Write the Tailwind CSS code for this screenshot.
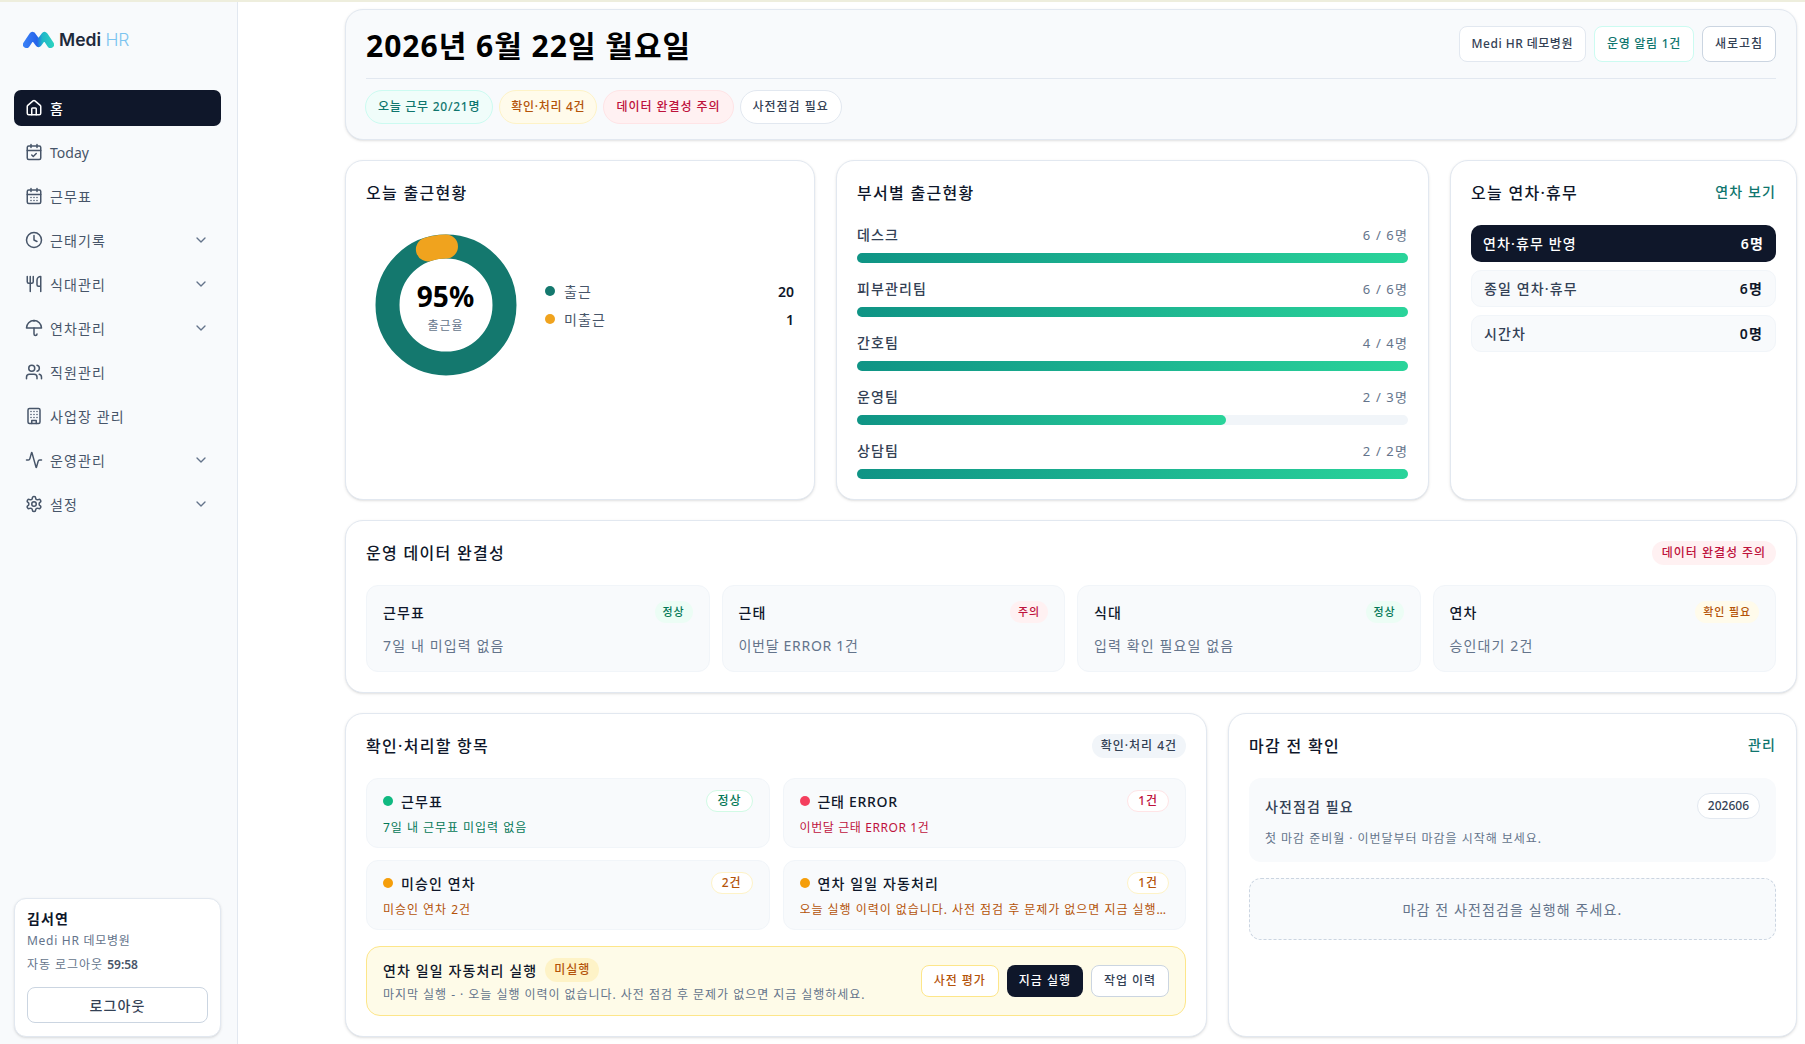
<!DOCTYPE html>
<html lang="ko">
<head>
  <meta charset="UTF-8">
  <title>Medi HR</title>
  <script src="https://cdn.jsdelivr.net/npm/@tailwindcss/browser@4"></script>
</head>
<body class="bg-white font-['Noto_Sans','Noto_Sans_CJK_KR',sans-serif] text-[#0f172a]">
<div class="h-[2px] bg-[#eeeedd]"></div>
<div class="flex h-[1042px] overflow-hidden">

  <!-- Sidebar -->
  <aside class="flex w-[238px] shrink-0 flex-col border-r border-[#e2e8f0] bg-[#f8fafc] pb-[7px] pl-[14px] pr-[16px]">
    <div class="flex h-[88px] items-start pl-[9px] pt-[29px]">
      <svg width="31" height="17" viewBox="0 0 31 17" fill="none">
        <defs>
          <linearGradient id="logoGrad" x1="0" y1="0" x2="31" y2="0" gradientUnits="userSpaceOnUse">
            <stop offset="0" stop-color="#3b82f6"/><stop offset=".45" stop-color="#2563eb"/><stop offset=".62" stop-color="#1fb6c9"/><stop offset="1" stop-color="#2dd4bf"/>
          </linearGradient>
        </defs>
        <path d="M3.5 13.5 9.5 4.5l6 8 6-8 6 9" stroke="url(#logoGrad)" stroke-width="7" stroke-linecap="round" stroke-linejoin="round"/>
      </svg>
      <span class="ml-[5px] font-['Inter'] text-[17.5px] leading-[18px] font-semibold text-[#1e293b]">Medi <span class="font-light text-[#7cc4f0]">HR</span></span>
    </div>

    <nav class="flex flex-col gap-[8px] text-[14px] tracking-[.08em] text-[#475569]">
      <a class="flex h-[36px] items-center gap-[7px] rounded-[7px] bg-[#0f172a] pl-[11px] pr-[12px] font-medium text-white">
        <svg class="size-[18px]" viewBox="0 0 24 24" fill="none" stroke="currentColor" stroke-width="2" stroke-linecap="round" stroke-linejoin="round"><path d="M15 21v-8a1 1 0 0 0-1-1h-4a1 1 0 0 0-1 1v8"/><path d="M3 10a2 2 0 0 1 .7-1.5l7-6a2 2 0 0 1 2.6 0l7 6A2 2 0 0 1 21 10v9a2 2 0 0 1-2 2H5a2 2 0 0 1-2-2z"/></svg>
        <span>홈</span>
      </a>
      <a class="flex h-[36px] items-center gap-[7px] pl-[11px] pr-[12px]">
        <svg class="size-[18px]" viewBox="0 0 24 24" fill="none" stroke="currentColor" stroke-width="2" stroke-linecap="round" stroke-linejoin="round"><path d="M8 2v4M16 2v4"/><rect x="3" y="4" width="18" height="18" rx="2"/><path d="M3 10h18M9 16l2 2 4-4"/></svg>
        <span class="tracking-normal">Today</span>
      </a>
      <a class="flex h-[36px] items-center gap-[7px] pl-[11px] pr-[12px]">
        <svg class="size-[18px]" viewBox="0 0 24 24" fill="none" stroke="currentColor" stroke-width="2" stroke-linecap="round" stroke-linejoin="round"><path d="M8 2v4M16 2v4"/><rect x="3" y="4" width="18" height="18" rx="2"/><path d="M3 10h18M8 14h.01M12 14h.01M16 14h.01M8 18h.01M12 18h.01M16 18h.01"/></svg>
        <span>근무표</span>
      </a>
      <a class="flex h-[36px] items-center gap-[7px] pl-[11px] pr-[12px]">
        <svg class="size-[18px]" viewBox="0 0 24 24" fill="none" stroke="currentColor" stroke-width="2" stroke-linecap="round" stroke-linejoin="round"><circle cx="12" cy="12" r="10"/><path d="M12 6v6l4 2"/></svg>
        <span class="flex-1">근태기록</span>
        <svg class="size-[16px] text-[#64748b]" viewBox="0 0 24 24" fill="none" stroke="currentColor" stroke-width="2" stroke-linecap="round" stroke-linejoin="round"><path d="m6 9 6 6 6-6"/></svg>
      </a>
      <a class="flex h-[36px] items-center gap-[7px] pl-[11px] pr-[12px]">
        <svg class="size-[18px]" viewBox="0 0 24 24" fill="none" stroke="currentColor" stroke-width="2" stroke-linecap="round" stroke-linejoin="round"><path d="M3 2v7c0 1.1.9 2 2 2h4a2 2 0 0 0 2-2V2M7 2v20M21 15V2a5 5 0 0 0-5 5v6c0 1.1.9 2 2 2h3zm0 0v7"/></svg>
        <span class="flex-1">식대관리</span>
        <svg class="size-[16px] text-[#64748b]" viewBox="0 0 24 24" fill="none" stroke="currentColor" stroke-width="2" stroke-linecap="round" stroke-linejoin="round"><path d="m6 9 6 6 6-6"/></svg>
      </a>
      <a class="flex h-[36px] items-center gap-[7px] pl-[11px] pr-[12px]">
        <svg class="size-[18px]" viewBox="0 0 24 24" fill="none" stroke="currentColor" stroke-width="2" stroke-linecap="round" stroke-linejoin="round"><path d="M22 12a10 10 0 0 0-20 0z"/><path d="M12 12v8a2 2 0 0 0 4 0M12 2v1"/></svg>
        <span class="flex-1">연차관리</span>
        <svg class="size-[16px] text-[#64748b]" viewBox="0 0 24 24" fill="none" stroke="currentColor" stroke-width="2" stroke-linecap="round" stroke-linejoin="round"><path d="m6 9 6 6 6-6"/></svg>
      </a>
      <a class="flex h-[36px] items-center gap-[7px] pl-[11px] pr-[12px]">
        <svg class="size-[18px]" viewBox="0 0 24 24" fill="none" stroke="currentColor" stroke-width="2" stroke-linecap="round" stroke-linejoin="round"><path d="M16 21v-2a4 4 0 0 0-4-4H6a4 4 0 0 0-4 4v2"/><circle cx="9" cy="7" r="4"/><path d="M22 21v-2a4 4 0 0 0-3-3.9M16 3.1a4 4 0 0 1 0 7.8"/></svg>
        <span>직원관리</span>
      </a>
      <a class="flex h-[36px] items-center gap-[7px] pl-[11px] pr-[12px]">
        <svg class="size-[18px]" viewBox="0 0 24 24" fill="none" stroke="currentColor" stroke-width="2" stroke-linecap="round" stroke-linejoin="round"><rect x="4" y="2" width="16" height="20" rx="2"/><path d="M9 22v-4h6v4M8 6h.01M12 6h.01M16 6h.01M8 10h.01M12 10h.01M16 10h.01M8 14h.01M12 14h.01M16 14h.01"/></svg>
        <span>사업장 관리</span>
      </a>
      <a class="flex h-[36px] items-center gap-[7px] pl-[11px] pr-[12px]">
        <svg class="size-[18px]" viewBox="0 0 24 24" fill="none" stroke="currentColor" stroke-width="2" stroke-linecap="round" stroke-linejoin="round"><path d="M22 12h-2.48a2 2 0 0 0-1.93 1.46l-2.35 8.36a.25.25 0 0 1-.48 0L9.24 2.18a.25.25 0 0 0-.48 0l-2.35 8.36A2 2 0 0 1 4.49 12H2"/></svg>
        <span class="flex-1">운영관리</span>
        <svg class="size-[16px] text-[#64748b]" viewBox="0 0 24 24" fill="none" stroke="currentColor" stroke-width="2" stroke-linecap="round" stroke-linejoin="round"><path d="m6 9 6 6 6-6"/></svg>
      </a>
      <a class="flex h-[36px] items-center gap-[7px] pl-[11px] pr-[12px]">
        <svg class="size-[18px]" viewBox="0 0 24 24" fill="none" stroke="currentColor" stroke-width="2" stroke-linecap="round" stroke-linejoin="round"><path d="M12.22 2h-.44a2 2 0 0 0-2 2v.18a2 2 0 0 1-1 1.73l-.43.25a2 2 0 0 1-2 0l-.15-.08a2 2 0 0 0-2.73.73l-.22.38a2 2 0 0 0 .73 2.73l.15.1a2 2 0 0 1 1 1.72v.51a2 2 0 0 1-1 1.74l-.15.09a2 2 0 0 0-.73 2.73l.22.38a2 2 0 0 0 2.73.73l.15-.08a2 2 0 0 1 2 0l.43.25a2 2 0 0 1 1 1.73V20a2 2 0 0 0 2 2h.44a2 2 0 0 0 2-2v-.18a2 2 0 0 1 1-1.73l.43-.25a2 2 0 0 1 2 0l.15.08a2 2 0 0 0 2.73-.73l.22-.39a2 2 0 0 0-.73-2.73l-.15-.08a2 2 0 0 1-1-1.74v-.5a2 2 0 0 1 1-1.74l.15-.09a2 2 0 0 0 .73-2.73l-.22-.38a2 2 0 0 0-2.73-.73l-.15.08a2 2 0 0 1-2 0l-.43-.25a2 2 0 0 1-1-1.73V4a2 2 0 0 0-2-2z"/><circle cx="12" cy="12" r="3"/></svg>
        <span class="flex-1">설정</span>
        <svg class="size-[16px] text-[#64748b]" viewBox="0 0 24 24" fill="none" stroke="currentColor" stroke-width="2" stroke-linecap="round" stroke-linejoin="round"><path d="m6 9 6 6 6-6"/></svg>
      </a>
    </nav>

    <div class="mt-auto h-[139px] rounded-[12px] border border-[#e2e8f0] bg-white px-[12px] pt-[10px] shadow-sm">
      <div class="text-[14px] leading-[20px] font-semibold tracking-[.08em]">김서연</div>
      <div class="mt-[3px] text-[12px] leading-[18px] tracking-[.06em] text-[#64748b]">Medi HR 데모병원</div>
      <div class="mt-[6px] text-[12px] leading-[18px] tracking-[.08em] text-[#64748b]">자동 로그아웃 <b class="font-semibold tracking-normal text-[#475569]">59:58</b></div>
      <button class="mt-[13px] h-[36px] w-full rounded-[8px] border border-[#cbd5e1] bg-white text-[14px] font-medium tracking-[.08em] text-[#334155]">로그아웃</button>
    </div>
  </aside>

  <!-- Main -->
  <main class="flex flex-1 flex-col gap-[20px] pl-[107px] pr-[8px] pt-[7px]">

    <!-- Date header -->
    <section class="h-[131px] shrink-0 rounded-[18px] border border-[#e2e8f0] bg-[#f8fafc] px-[20px] pt-[16px] shadow-sm">
      <div class="flex h-[53px] items-start justify-between border-b border-[#e2e8f0]">
        <h1 class="text-[30px] leading-[40px] font-bold tracking-[1px] text-black">2026년 6월 22일 월요일</h1>
        <div class="flex gap-[8px] text-[12px] font-medium tracking-[.08em]">
          <span class="flex h-[36px] items-center rounded-[8px] border border-[#e2e8f0] bg-white px-[12px] tracking-[.04em] text-[#334155]">Medi HR 데모병원</span>
          <span class="flex h-[36px] items-center rounded-[8px] border border-[#ccfbf1] bg-white px-[12px] tracking-[.06em] text-[#0f766e]">운영 알림 1건</span>
          <button class="h-[36px] rounded-[8px] border border-[#cbd5e1] bg-white px-[12px] font-medium text-[#334155]">새로고침</button>
        </div>
      </div>
      <div class="-ml-[1px] mt-[11px] flex gap-[6px] text-[12px] font-medium tracking-[.08em]">
        <span class="flex h-[34px] items-center rounded-full border border-[#ccfbf1] bg-[#f0fdfa] px-[12px] tracking-[.06em] text-[#0f766e]">오늘 근무 20/21명</span>
        <span class="flex h-[34px] items-center rounded-full border border-[#fef3c7] bg-[#fffbeb] px-[11px] tracking-[.06em] text-[#b45309]">확인·처리 4건</span>
        <span class="flex h-[34px] items-center rounded-full border border-[#ffe4e6] bg-[#fff1f2] px-[12px] text-[#be123c]">데이터 완결성 주의</span>
        <span class="flex h-[34px] items-center rounded-full border border-[#e2e8f0] bg-white px-[12px] text-[#334155]">사전점검 필요</span>
      </div>
    </section>

    <!-- Attendance row -->
    <div class="grid h-[340px] shrink-0 grid-cols-[470px_593px_347px] gap-[21px]">
      <section class="rounded-[18px] border border-[#e2e8f0] bg-white px-[20px] pt-[20px] shadow-sm">
        <h2 class="text-[16px] leading-[24px] font-medium tracking-[.08em]">오늘 출근현황</h2>
        <div class="mt-[21px] flex items-center gap-[20px]">
          <div class="relative flex h-[158px] w-[159px] shrink-0 items-center justify-center">
            <svg width="142" height="142" viewBox="0 0 142 142" fill="none">
              <circle cx="71" cy="71" r="58.5" stroke="#14786e" stroke-width="24"/>
              <path d="M52.9 15.4A58.5 58.5 0 0 1 71 12.5" stroke="#f0a31e" stroke-width="24" stroke-linecap="round"/>
            </svg>
            <div class="absolute inset-0 flex flex-col items-center justify-center pt-[3px]">
              <span class="text-[28px] leading-[34px] font-bold text-black">95%</span>
              <span class="mt-[4px] text-[12px] leading-[18px] tracking-[.08em] text-[#64748b]">출근율</span>
            </div>
          </div>
          <div class="flex flex-1 flex-col gap-[8px] text-[14px] tracking-[.08em] text-[#475569]">
            <div class="flex h-[20px] items-center gap-[9px]"><i class="size-[10px] rounded-full bg-[#14786e]"></i><span class="flex-1">출근</span><b class="font-semibold tracking-normal text-[#0f172a]">20</b></div>
            <div class="flex h-[20px] items-center gap-[9px]"><i class="size-[10px] rounded-full bg-[#f0a31e]"></i><span class="flex-1">미출근</span><b class="font-semibold tracking-normal text-[#0f172a]">1</b></div>
          </div>
        </div>
      </section>

      <section class="rounded-[18px] border border-[#e2e8f0] bg-white px-[20px] pt-[20px] shadow-sm">
        <h2 class="text-[16px] leading-[24px] font-medium tracking-[.08em]">부서별 출근현황</h2>
        <div class="mt-[20px] flex flex-col gap-[16px]">
          <div>
            <div class="flex justify-between text-[14px] leading-[20px] font-medium tracking-[.08em] text-[#334155]"><span>데스크</span><span class="text-[13px] font-normal text-[#64748b]">6 / 6명</span></div>
            <div class="mt-[8px] h-[10px] rounded-full bg-[#f1f5f9]"><div class="h-full rounded-full bg-linear-to-r from-[#0f9485] to-[#2ad49a]" style="width:100%"></div></div>
          </div>
          <div>
            <div class="flex justify-between text-[14px] leading-[20px] font-medium tracking-[.08em] text-[#334155]"><span>피부관리팀</span><span class="text-[13px] font-normal text-[#64748b]">6 / 6명</span></div>
            <div class="mt-[8px] h-[10px] rounded-full bg-[#f1f5f9]"><div class="h-full rounded-full bg-linear-to-r from-[#0f9485] to-[#2ad49a]" style="width:100%"></div></div>
          </div>
          <div>
            <div class="flex justify-between text-[14px] leading-[20px] font-medium tracking-[.08em] text-[#334155]"><span>간호팀</span><span class="text-[13px] font-normal text-[#64748b]">4 / 4명</span></div>
            <div class="mt-[8px] h-[10px] rounded-full bg-[#f1f5f9]"><div class="h-full rounded-full bg-linear-to-r from-[#0f9485] to-[#2ad49a]" style="width:100%"></div></div>
          </div>
          <div>
            <div class="flex justify-between text-[14px] leading-[20px] font-medium tracking-[.08em] text-[#334155]"><span>운영팀</span><span class="text-[13px] font-normal text-[#64748b]">2 / 3명</span></div>
            <div class="mt-[8px] h-[10px] rounded-full bg-[#f1f5f9]"><div class="h-full rounded-full bg-linear-to-r from-[#0f9485] to-[#2ad49a]" style="width:67%"></div></div>
          </div>
          <div>
            <div class="flex justify-between text-[14px] leading-[20px] font-medium tracking-[.08em] text-[#334155]"><span>상담팀</span><span class="text-[13px] font-normal text-[#64748b]">2 / 2명</span></div>
            <div class="mt-[8px] h-[10px] rounded-full bg-[#f1f5f9]"><div class="h-full rounded-full bg-linear-to-r from-[#0f9485] to-[#2ad49a]" style="width:100%"></div></div>
          </div>
        </div>
      </section>

      <section class="rounded-[18px] border border-[#e2e8f0] bg-white px-[20px] pt-[20px] shadow-sm">
        <div class="flex items-center justify-between">
          <h2 class="text-[16px] leading-[24px] font-medium tracking-[.08em]">오늘 연차·휴무</h2>
          <a class="mb-[3px] text-[14px] leading-[20px] font-medium tracking-[.08em] text-[#0f766e]">연차 보기</a>
        </div>
        <div class="mt-[20px] flex flex-col gap-[8px] text-[14px] font-medium tracking-[.08em]">
          <div class="flex h-[37px] items-center justify-between rounded-[10px] bg-[#0f172a] px-[12px] text-white"><span>연차·휴무 반영</span><b class="font-semibold">6명</b></div>
          <div class="flex h-[37px] items-center justify-between rounded-[10px] border border-[#f1f5f9] bg-[#f8fafc] px-[12px] text-[#334155]"><span>종일 연차·휴무</span><b class="font-semibold text-[#0f172a]">6명</b></div>
          <div class="flex h-[37px] items-center justify-between rounded-[10px] border border-[#f1f5f9] bg-[#f8fafc] px-[12px] text-[#334155]"><span>시간차</span><b class="font-semibold text-[#0f172a]">0명</b></div>
        </div>
      </section>
    </div>

    <!-- Data completeness -->
    <section class="h-[173px] shrink-0 rounded-[18px] border border-[#e2e8f0] bg-white px-[20px] pt-[20px] shadow-sm">
      <div class="flex h-[24px] items-center justify-between">
        <h2 class="text-[16px] font-medium tracking-[.08em]">운영 데이터 완결성</h2>
        <span class="flex h-[24px] items-center rounded-full bg-[#fff1f2] px-[10px] text-[12px] font-medium tracking-[.08em] text-[#be123c]">데이터 완결성 주의</span>
      </div>
      <div class="mt-[20px] grid grid-cols-4 gap-[12px]">
        <div class="h-[87px] rounded-[12px] border border-[#f1f5f9] bg-[#f8fafc] px-[16px] pt-[15px]">
          <div class="flex h-[22px] items-center justify-between"><b class="text-[14px] font-medium tracking-[.08em]">근무표</b><span class="flex h-[22px] items-center rounded-full bg-[#ecfdf5] px-[8px] text-[11px] font-medium tracking-[.08em] text-[#047857]">정상</span></div>
          <p class="mt-[13px] text-[14px] leading-[20px] tracking-[.08em] text-[#64748b]">7일 내 미입력 없음</p>
        </div>
        <div class="h-[87px] rounded-[12px] border border-[#f1f5f9] bg-[#f8fafc] px-[16px] pt-[15px]">
          <div class="flex h-[22px] items-center justify-between"><b class="text-[14px] font-medium tracking-[.08em]">근태</b><span class="flex h-[22px] items-center rounded-full bg-[#fff1f2] px-[8px] text-[11px] font-medium tracking-[.08em] text-[#be123c]">주의</span></div>
          <p class="mt-[13px] text-[14px] leading-[20px] tracking-[.05em] text-[#64748b]">이번달 ERROR 1건</p>
        </div>
        <div class="h-[87px] rounded-[12px] border border-[#f1f5f9] bg-[#f8fafc] px-[16px] pt-[15px]">
          <div class="flex h-[22px] items-center justify-between"><b class="text-[14px] font-medium tracking-[.08em]">식대</b><span class="flex h-[22px] items-center rounded-full bg-[#ecfdf5] px-[8px] text-[11px] font-medium tracking-[.08em] text-[#047857]">정상</span></div>
          <p class="mt-[13px] text-[14px] leading-[20px] tracking-[.08em] text-[#64748b]">입력 확인 필요일 없음</p>
        </div>
        <div class="h-[87px] rounded-[12px] border border-[#f1f5f9] bg-[#f8fafc] px-[16px] pt-[15px]">
          <div class="flex h-[22px] items-center justify-between"><b class="text-[14px] font-medium tracking-[.08em]">연차</b><span class="flex h-[22px] items-center rounded-full bg-[#fffbeb] px-[8px] text-[11px] font-medium tracking-[.08em] text-[#b45309]">확인 필요</span></div>
          <p class="mt-[13px] text-[14px] leading-[20px] tracking-[.08em] text-[#64748b]">승인대기 2건</p>
        </div>
      </div>
    </section>

    <!-- Bottom row -->
    <div class="grid h-[324px] shrink-0 grid-cols-[862px_569px] gap-[21px]">
      <section class="rounded-[18px] border border-[#e2e8f0] bg-white px-[20px] pt-[20px] shadow-sm">
        <div class="flex h-[24px] items-center justify-between">
          <h2 class="text-[16px] font-medium tracking-[.08em]">확인·처리할 항목</h2>
          <span class="flex h-[24px] items-center rounded-full bg-[#f1f5f9] px-[9px] text-[12px] font-medium tracking-[.08em] text-[#334155]">확인·처리 4건</span>
        </div>
        <div class="mt-[20px] grid grid-cols-2 gap-x-[13px] gap-y-[12px]">
          <div class="h-[70px] min-w-0 rounded-[12px] border border-[#f1f5f9] bg-[#f8fafc] px-[16px] pt-[11px]">
            <div class="flex h-[22px] items-center"><i class="size-[10px] rounded-full bg-[#10b981]"></i><b class="ml-[8px] flex-1 text-[14px] font-medium tracking-[.08em]">근무표</b><span class="flex h-[22px] items-center rounded-full border border-[#d1fae5] bg-white px-[10px] text-[12px] font-medium tracking-[.08em] text-[#047857]">정상</span></div>
            <p class="mt-[7px] text-[12px] leading-[18px] tracking-[.08em] text-[#047857]">7일 내 근무표 미입력 없음</p>
          </div>
          <div class="h-[70px] min-w-0 rounded-[12px] border border-[#f1f5f9] bg-[#f8fafc] px-[16px] pt-[11px]">
            <div class="flex h-[22px] items-center"><i class="size-[10px] rounded-full bg-[#f43f5e]"></i><b class="ml-[8px] flex-1 text-[14px] font-medium tracking-[.05em]">근태 ERROR</b><span class="flex h-[22px] items-center rounded-full border border-[#ffe4e6] bg-white px-[10px] text-[12px] font-medium tracking-[.08em] text-[#be123c]">1건</span></div>
            <p class="mt-[7px] text-[12px] leading-[18px] tracking-[.05em] text-[#be123c]">이번달 근태 ERROR 1건</p>
          </div>
          <div class="h-[70px] min-w-0 rounded-[12px] border border-[#f1f5f9] bg-[#f8fafc] px-[16px] pt-[11px]">
            <div class="flex h-[22px] items-center"><i class="size-[10px] rounded-full bg-[#f59e0b]"></i><b class="ml-[8px] flex-1 text-[14px] font-medium tracking-[.08em]">미승인 연차</b><span class="flex h-[22px] items-center rounded-full border border-[#fef3c7] bg-white px-[10px] text-[12px] font-medium tracking-[.08em] text-[#b45309]">2건</span></div>
            <p class="mt-[7px] text-[12px] leading-[18px] tracking-[.08em] text-[#b45309]">미승인 연차 2건</p>
          </div>
          <div class="h-[70px] min-w-0 rounded-[12px] border border-[#f1f5f9] bg-[#f8fafc] px-[16px] pt-[11px]">
            <div class="flex h-[22px] items-center"><i class="size-[10px] rounded-full bg-[#f59e0b]"></i><b class="ml-[8px] flex-1 text-[14px] font-medium tracking-[.08em]">연차 일일 자동처리</b><span class="flex h-[22px] items-center rounded-full border border-[#fef3c7] bg-white px-[10px] text-[12px] font-medium tracking-[.08em] text-[#b45309]">1건</span></div>
            <p class="mt-[7px] truncate text-[12px] leading-[18px] tracking-[.08em] text-[#b45309]">오늘 실행 이력이 없습니다. 사전 점검 후 문제가 없으면 지금 실행하세요.</p>
          </div>
        </div>
        <div class="mt-[16px] flex h-[70px] items-center justify-between rounded-[14px] border border-[#fde68a] bg-[#fefbe8] px-[16px]">
          <div>
            <div class="flex h-[24px] items-center"><b class="text-[14px] font-medium tracking-[.08em]">연차 일일 자동처리 실행</b><span class="ml-[8px] flex h-[24px] items-center rounded-full bg-[#fef3c7] px-[9px] text-[12px] font-medium tracking-[.08em] text-[#b45309]">미실행</span></div>
            <p class="mt-[4px] text-[12px] leading-[18px] tracking-[.08em] text-[#64748b]">마지막 실행 - · 오늘 실행 이력이 없습니다. 사전 점검 후 문제가 없으면 지금 실행하세요.</p>
          </div>
          <div class="flex gap-[8px] text-[12px] font-medium tracking-[.08em]">
            <button class="h-[32px] rounded-[8px] border border-[#fde68a] bg-white px-[12px] font-medium text-[#b45309]">사전 평가</button>
            <button class="h-[32px] rounded-[8px] bg-[#0f172a] px-[12px] font-medium text-white">지금 실행</button>
            <button class="h-[32px] rounded-[8px] border border-[#cbd5e1] bg-white px-[12px] font-medium text-[#334155]">작업 이력</button>
          </div>
        </div>
      </section>

      <section class="rounded-[18px] border border-[#e2e8f0] bg-white px-[20px] pt-[20px] shadow-sm">
        <div class="flex h-[24px] items-center justify-between">
          <h2 class="text-[16px] font-medium tracking-[.08em]">마감 전 확인</h2>
          <a class="mb-[3px] text-[14px] font-medium tracking-[.08em] text-[#0f766e]">관리</a>
        </div>
        <div class="mt-[20px] h-[84px] rounded-[12px] bg-[#f8fafc] px-[16px] pt-[15px]">
          <div class="flex h-[26px] items-center justify-between">
            <b class="text-[14px] font-medium tracking-[.08em] text-[#334155]">사전점검 필요</b>
            <span class="flex h-[26px] items-center rounded-full border border-[#e2e8f0] bg-white px-[10px] text-[12px] font-medium text-[#334155]">202606</span>
          </div>
          <p class="mt-[11px] text-[12px] leading-[18px] tracking-[.08em] text-[#64748b]">첫 마감 준비월 · 이번달부터 마감을 시작해 보세요.</p>
        </div>
        <div class="mt-[16px] flex h-[62px] items-center justify-center rounded-[12px] border border-dashed border-[#cbd5e1] bg-[#f8fafc] text-[14px] tracking-[.08em] text-[#64748b]">마감 전 사전점검을 실행해 주세요.</div>
      </section>
    </div>
  </main>
</div>
</body>
</html>
